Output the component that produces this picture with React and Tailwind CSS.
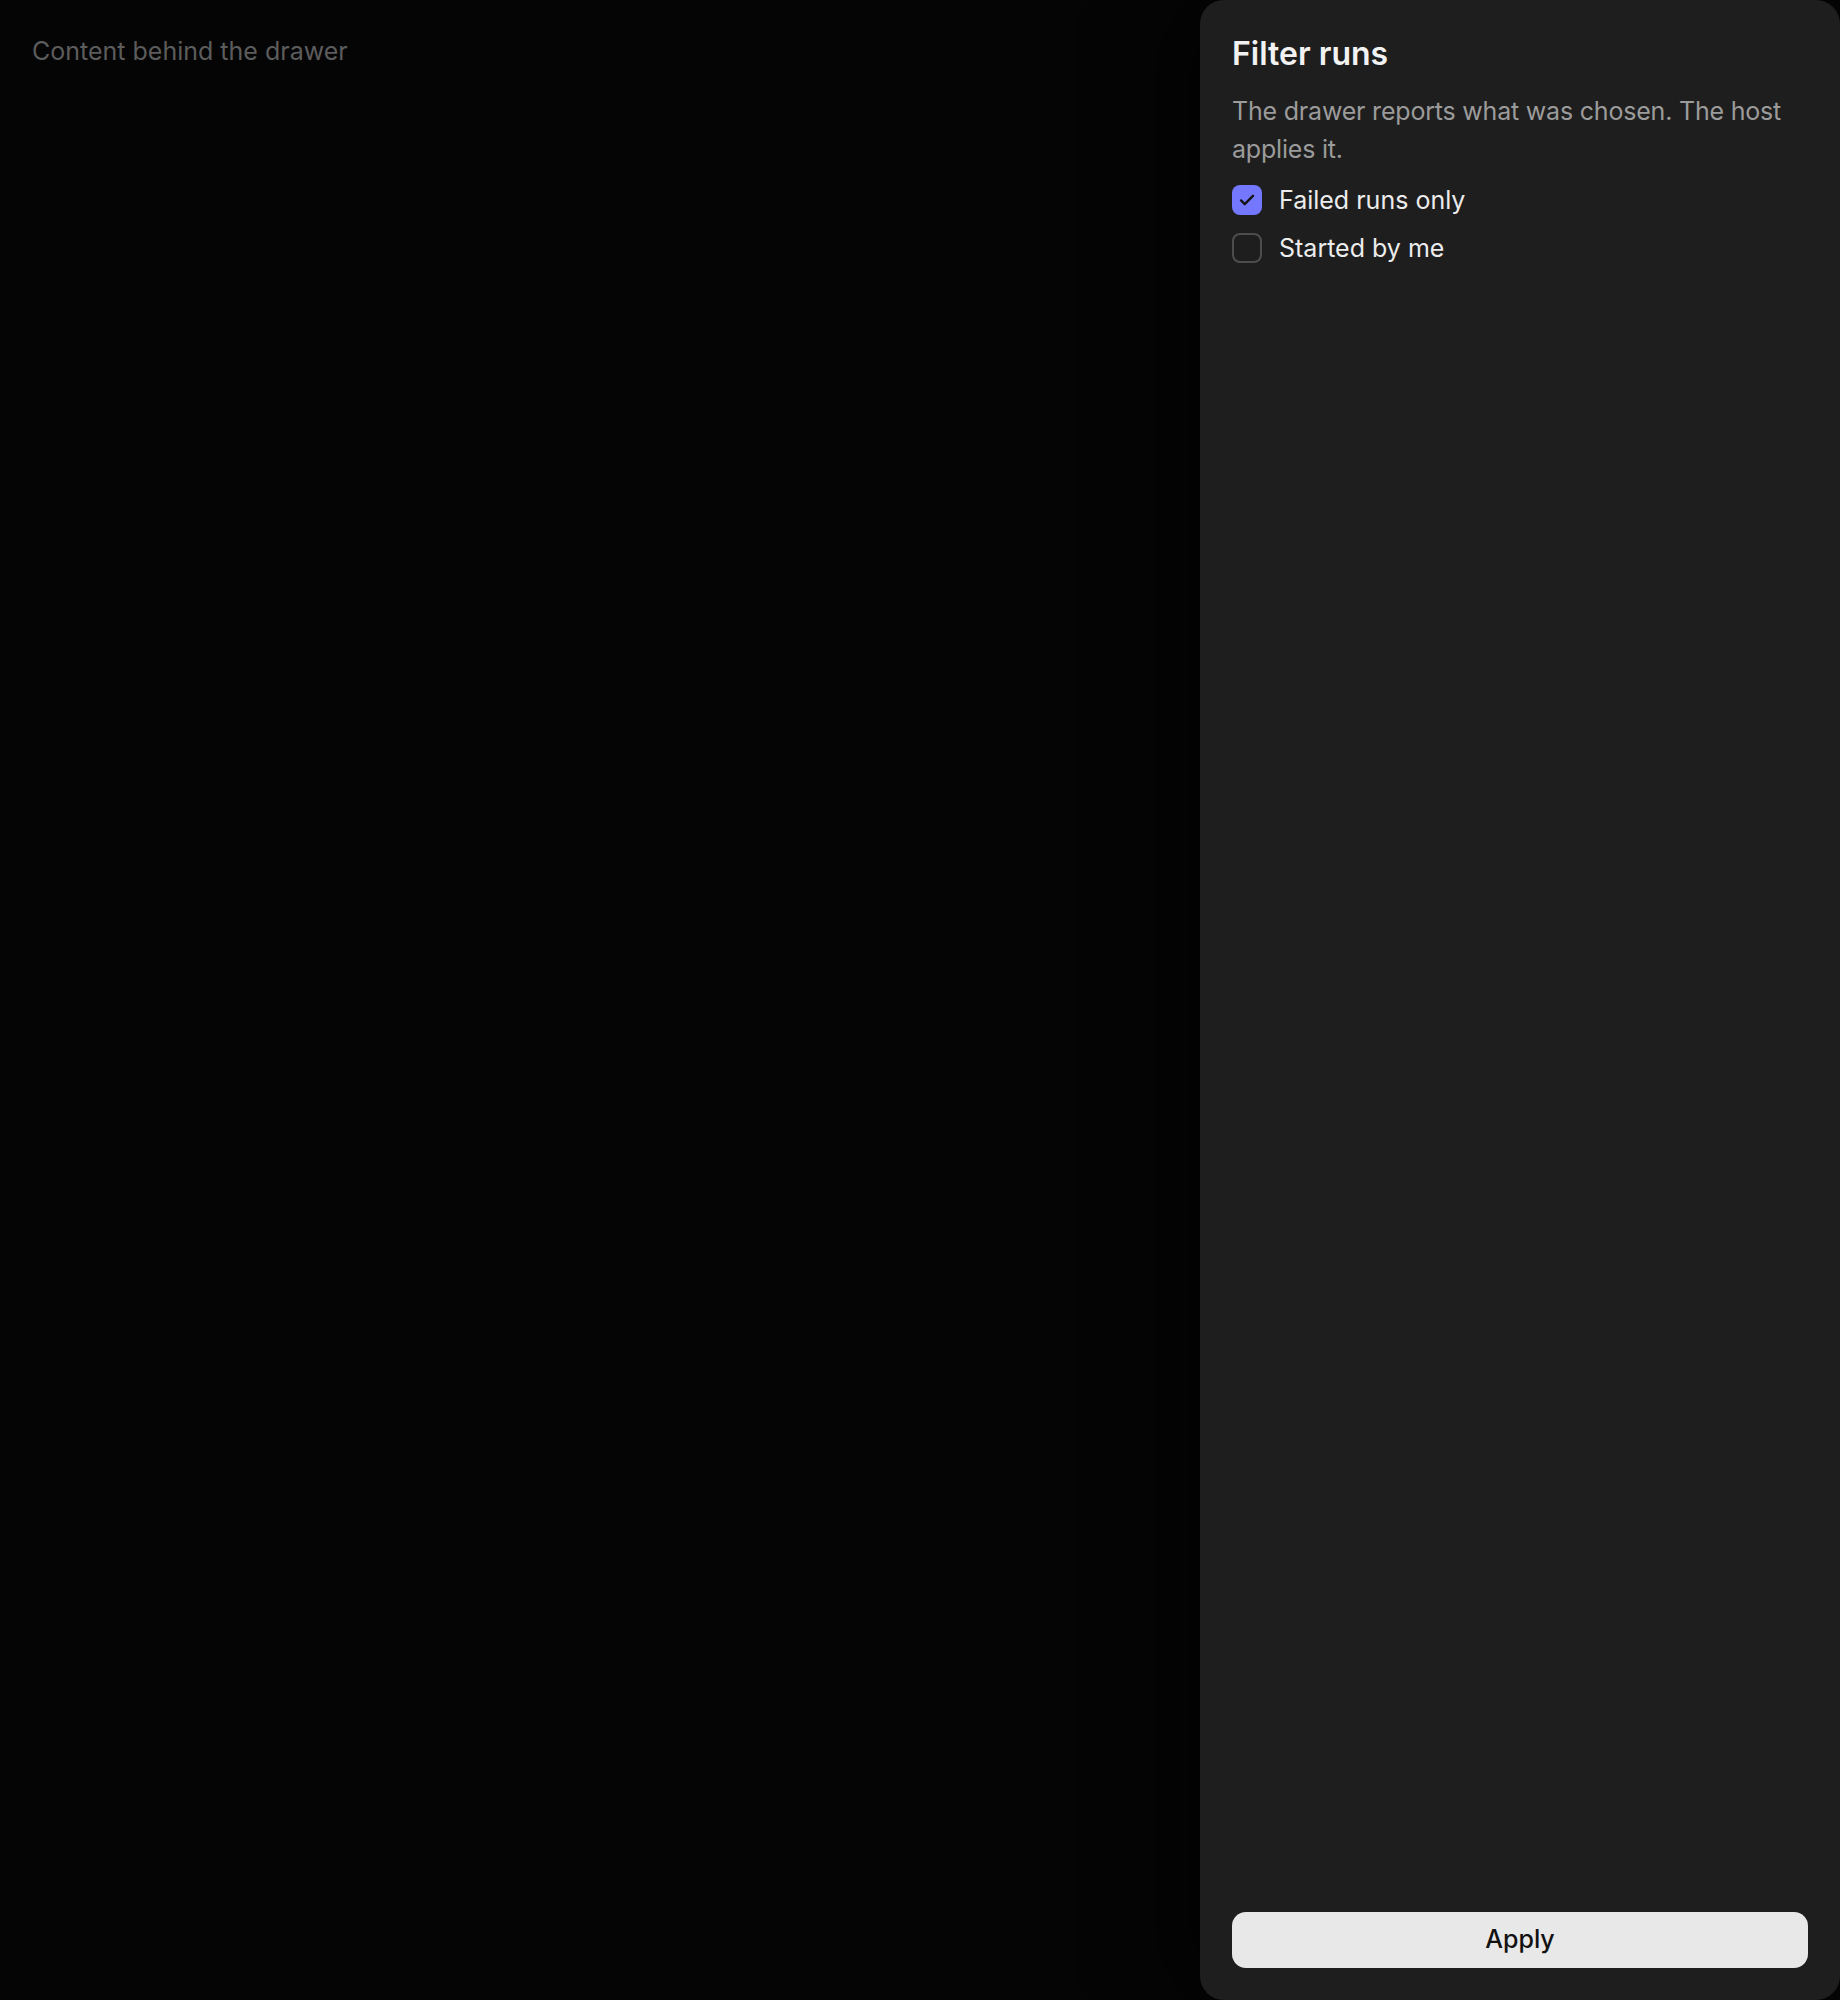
import React from "react";

function Check({ checked, label }) {
  return (
    <label className="flex items-center gap-[17px] h-[30px]">
      {checked ? (
        <span className="w-[30px] h-[30px] rounded-[8px] bg-[#7478ff] flex items-center justify-center shrink-0">
          <svg width="22" height="22" viewBox="0 0 24 24" fill="none" stroke="#151515" strokeWidth="2.6" strokeLinecap="round" strokeLinejoin="round">
            <path d="M5.5 12.5l4 4L18.5 7.5" />
          </svg>
        </span>
      ) : (
        <span className="w-[30px] h-[30px] rounded-[8px] border-2 border-[#4d4d4d] shrink-0" />
      )}
      <span className="text-[25px] leading-[30px] text-[#ececec]">{label}</span>
    </label>
  );
}

export default function App() {
  return (
    <div
      className="w-[1840px] h-[2000px] bg-[#050505] flex overflow-hidden"
      style={{ fontFamily: "Inter, 'Noto Sans', sans-serif" }}
    >
      <div className="flex-1 px-[32px] pt-[33px]">
        <p className="text-[25px] leading-[37.5px] text-[#5c5c5c]">Content behind the drawer</p>
      </div>
      <aside className="w-[640px] h-[2000px] bg-[#1e1e1e] rounded-[24px] p-[32px] flex flex-col shadow-[-30px_0_80px_rgba(0,0,0,0.6)]">
        <h2 className="text-[32px] leading-[44px] font-semibold text-[#f2f2f2]">Filter runs</h2>
        <p className="mt-[17px] text-[25px] leading-[37.5px] text-[#9b9b9b] tracking-[-0.2px]">
          The drawer reports what was chosen. The host applies it.
        </p>
        <div className="mt-[17px] flex flex-col gap-[18px]">
          <Check checked label="Failed runs only" />
          <Check checked={false} label="Started by me" />
        </div>
        <div className="flex-1" />
        <button className="w-full h-[56px] rounded-[14px] bg-[#e8e8e8] text-[#121212] text-[25px] font-medium">
          Apply
        </button>
      </aside>
    </div>
  );
}
